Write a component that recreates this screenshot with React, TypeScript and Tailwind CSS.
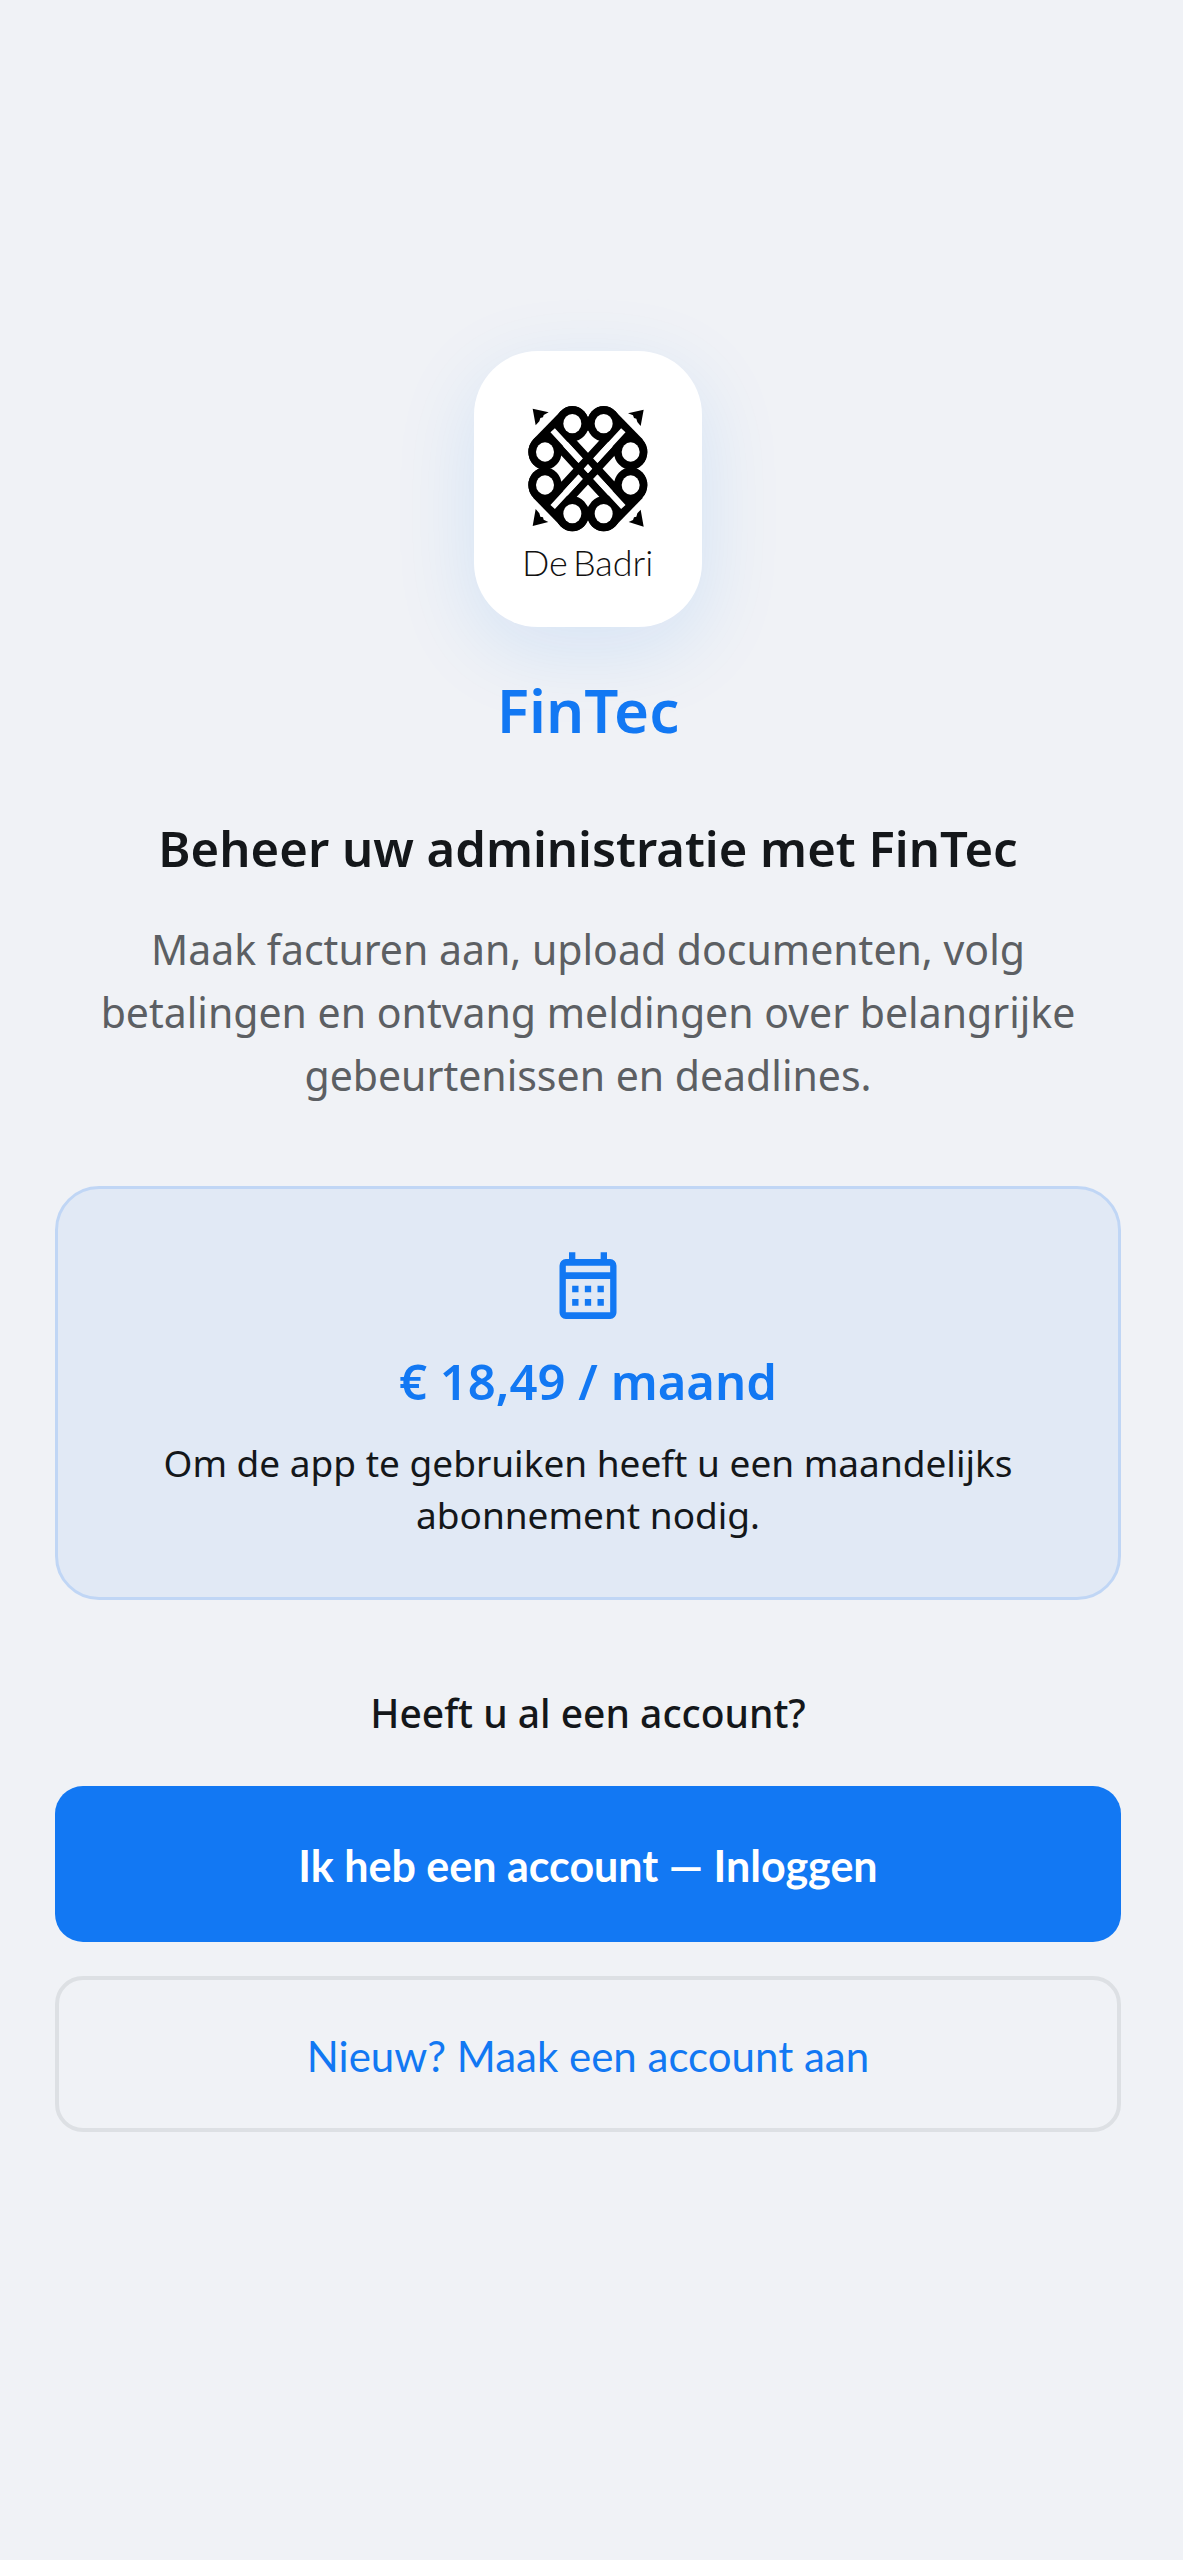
function BrandMark() {
  const holes = [
    [217, 101],
    [311, 101],
    [135, 186],
    [135, 285],
    [217, 371],
    [311, 371],
    [392, 186],
    [392, 285],
  ];
  return (
    <svg viewBox="-6 -3 540 600" className="h-[200px] w-[180px]" role="img" aria-label="De Badri">
      <g fill="#000">
        <path d="M98 56 146 67 131 75 129 82 121 84 118 94 107 106Z" />
        <path d="M431 59 384 70 399 76 402 84 409 86 412 96 422 108Z" />
        <path d="M107 357 98 408 145 396 131 389 129 382 121 380 118 370Z" />
        <path d="M422 359 431 410 386 396 399 390 402 382 409 380 412 370Z" />
        {holes.map(([x, y]) => (
          <ellipse key={`${x}-${y}`} cx={x} cy={y} rx={50} ry={53} />
        ))}
        <path d="M182 64 100 148 135 186 175 185 217 140 217 101Z" />
        <path d="M346 64 428 148 392 186 352 185 311 140 311 101Z" />
        <path d="M182 408 100 324 135 285 175 287 217 332 217 371Z" />
        <path d="M346 408 428 324 392 285 352 287 311 332 311 371Z" />
      </g>
      <path
        d="M225 148 264 122 303 148 264 190ZM175 190 218 236 175 284 148 236ZM353 190 310 236 353 284 380 236ZM225 324 264 282 303 324 264 350Z"
        fill="#fff"
      />
      <g fill="none" stroke="#000" strokeWidth={23}>
        {holes.map(([x, y]) => (
          <ellipse key={`${x}-${y}`} cx={x} cy={y} rx={38.5} ry={41} />
        ))}
        <path d="M180 114 377 328M151 144 348 358M348 114 151 328M377 144 180 358" />
      </g>
      <g fill="#fff">
        {holes.map(([x, y]) => (
          <ellipse key={`${x}-${y}`} cx={x} cy={y} rx={27} ry={29} />
        ))}
      </g>
      <path
        d="M158 121 241 211M370 121 287 211M158 351 241 261M370 351 287 261"
        stroke="#fff"
        strokeWidth={18}
      />
      <path d="M264 223 276 236 264 249 252 236Z" fill="#fff" />
      <g fill="#111" fontSize={108} className="font-[Lato] font-light">
        <text x={66} y={557}>
          De
        </text>
        <text x={460} y={557} textAnchor="end">
          Badri
        </text>
      </g>
    </svg>
  );
}

function CalendarIcon() {
  return (
    <svg
      viewBox="0 0 24 24"
      preserveAspectRatio="none"
      className="h-20 w-[76px]"
      fill="currentColor"
      aria-hidden="true"
    >
      <path d="M7 11H9V13H7V11M21 5V19C21 20.11 20.11 21 19 21H5C3.89 21 3 20.1 3 19V5A2 2 0 0 1 5 3H6V1H8V3H16V1H18V3H19A2 2 0 0 1 21 5M5 5V7H19V5H5M19 19V9H5V19H19M15 13V11H17V13H15M11 13V11H13V13H11M7 15H9V17H7V15M15 17V15H17V17H15M11 17V15H13V17H11Z" />
    </svg>
  );
}

export default function App() {
  return (
    <main className="flex min-h-screen flex-col items-center bg-[#f0f2f6] pt-[351px] pr-[62px] pb-32 pl-[55px] text-center font-['Noto_Sans',sans-serif] text-[#14171a]">
      <div className="flex h-[276px] w-[228px] items-center justify-center rounded-[64px] bg-white shadow-[0_22px_84px_rgba(18,120,243,0.12)]">
        <BrandMark />
      </div>
      <p className="mt-[43px] text-[60px] leading-[80px] font-semibold text-[#1278f3]">FinTec</p>

      <h1 className="mt-[62px] text-[49px] leading-[72px] font-semibold">
        Beheer uw administratie met FinTec
      </h1>
      <p className="mt-[34px] px-8 text-[41px] leading-[63px] text-[#5c5f63]">
        Maak facturen aan, upload documenten, volg betalingen en ontvang meldingen over belangrijke
        gebeurtenissen en deadlines.
      </p>

      <section className="mt-[79px] flex w-full flex-col items-center rounded-[44px] border-3 border-[#c0d6f5] bg-[#e1e9f5] px-20 pt-[60px] pb-14">
        <span className="text-[#1278f3]">
          <CalendarIcon />
        </span>
        <h2 className="mt-4 text-[49px] leading-[72px] font-semibold text-[#1278f3]">
          € 18,49 / maand
        </h2>
        <p className="mt-5 text-[37px] leading-[52px]">
          Om de app te gebruiken heeft u een maandelijks abonnement nodig.
        </p>
      </section>

      <p className="mt-[83px] text-[39px] leading-[60px] font-medium">Heeft u al een account?</p>
      <button
        type="button"
        className="mt-[43px] h-[156px] w-full rounded-[28px] bg-[#1278f3] pt-1 font-[Lato,sans-serif] text-[43px] font-bold text-white"
      >
        Ik heb een account — Inloggen
      </button>
      <button
        type="button"
        className="mt-[34px] h-[156px] w-full rounded-[28px] border-4 border-[#dde0e4] pt-1 font-[Lato,sans-serif] text-[42px] text-[#1278f3]"
      >
        Nieuw? Maak een account aan
      </button>
    </main>
  );
}
